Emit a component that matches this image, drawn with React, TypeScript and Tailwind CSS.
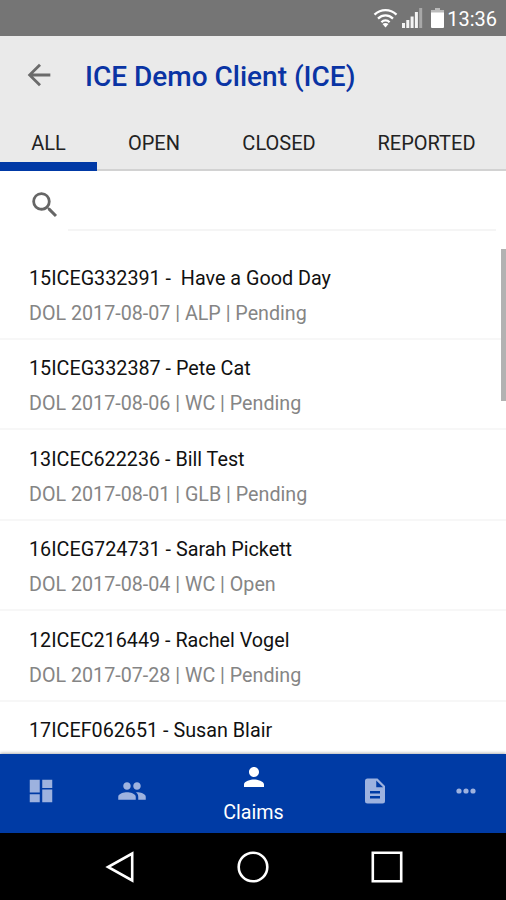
const claims = [
  { id: "15ICEG332391", name: "\u00a0Have a Good Day", details: "DOL 2017-08-07 | ALP | Pending" },
  { id: "15ICEG332387", name: "Pete Cat", details: "DOL 2017-08-06 | WC | Pending" },
  { id: "13ICEC622236", name: "Bill Test", details: "DOL 2017-08-01 | GLB | Pending" },
  { id: "16ICEG724731", name: "Sarah Pickett", details: "DOL 2017-08-04 | WC | Open" },
  { id: "12ICEC216449", name: "Rachel Vogel", details: "DOL 2017-07-28 | WC | Pending" },
  { id: "17ICEF062651", name: "Susan Blair" },
];

const StatusBar = () => (
  <div className="flex h-9 shrink-0 items-center justify-end bg-[#757575] pr-[9px] text-white">
    <svg className="mr-1" width="25" height="20" viewBox="0 0 25 20" fill="none" stroke="#fff" strokeWidth="2.3">
      <path d="M1.5 6.6C8 .6 17 .6 23.5 6.6" />
      <path d="M5 10.6c4.5-4.2 10.5-4.2 15 0" />
      <path d="M8.4 14.2c2.4-2.4 5.8-2.4 8.2 0" />
      <path d="M12.5 19.5l-3-3.4c1.7-1.5 4.3-1.5 6 0z" fill="#fff" stroke="none" />
    </svg>
    <svg className="mr-2" width="21" height="20" viewBox="0 0 21 20" fill="#f4f4f4">
      <path d="M0 15h3v5H0zM4.3 12h3v8h-3zM8.6 8.5h3V20h-3zM12.9 4h3v16h-3z" />
      <path d="M17.2 0h3v20h-3z" opacity=".4" />
    </svg>
    <svg className="mr-[3px]" width="13" height="20" viewBox="0 0 13 20" fill="#fff">
      <path d="M4 0h5v2h4v3H0V2h4z" opacity=".5" />
      <path d="M0 4.5h13V19a1 1 0 0 1-1 1H1a1 1 0 0 1-1-1z" />
    </svg>
    <span className="pt-[2px] text-[20px] leading-5">13:36</span>
  </div>
);

const Header = () => (
  <header className="h-[135px] shrink-0 border-b-2 border-[#d2d2d2] bg-[#eaeaea]">
    <div className="flex h-[78px] items-center pl-[22px]">
      <svg width="34" height="34" viewBox="0 0 24 24" fill="#6b6b6b">
        <path d="M20 11H7.83l5.59-5.59L12 4l-8 8 8 8 1.41-1.41L7.83 13H20v-2z" />
      </svg>
      <h1 className="pl-[29px] pt-[4px] text-[28px] font-medium leading-8 text-[#0a34a4]">
        ICE Demo Client (ICE)
      </h1>
    </div>
    <nav className="flex h-[57px] text-[20px] leading-[58px] text-[#222]">
      <span className="w-[97px] border-b-[9px] border-[#0039a6] text-center">ALL</span>
      <span className="w-[114px] text-center">OPEN</span>
      <span className="w-[136px] text-center">CLOSED</span>
      <span className="w-[159px] text-center">REPORTED</span>
    </nav>
  </header>
);

const Search = () => (
  <div className="flex h-[78px] shrink-0 pl-[28px] pr-[10px] pt-[17px]">
    <svg width="34" height="34" viewBox="0 0 24 24" fill="#666">
      <path d="M15.5 14h-.79l-.28-.27A6.471 6.471 0 0 0 16 9.5 6.5 6.5 0 1 0 9.5 16c1.61 0 3.09-.59 4.23-1.57l.27.28v.79l5 4.99L20.49 19l-4.99-5zm-6 0C7.01 14 5 11.99 5 9.5S7.01 5 9.5 5 14 7.01 14 9.5 11.99 14 9.5 14z" />
    </svg>
    <div className="ml-[6px] h-[43px] flex-1 border-b-2 border-[#f5f5f5]" />
  </div>
);

const TabBar = () => (
  <nav className="relative flex h-[79px] shrink-0 bg-[#003ba5] pl-[26px] text-[#9db2df] shadow-[0_-1px_3px_rgba(0,0,0,0.3)]">
    <svg className="mt-[22px]" width="30" height="30" viewBox="0 0 24 24" fill="currentColor">
      <path d="M3 13.2h8V3H3v10.2zM3 21h8v-6.5H3V21zm10 0h8V10.8h-8V21zm0-18v6.5h8V3h-8z" />
    </svg>
    <svg className="ml-[61px] mt-[22px]" width="30" height="30" viewBox="0 0 24 24" fill="currentColor">
      <path d="M16 11c1.66 0 2.99-1.34 2.99-3S17.66 5 16 5s-3 1.34-3 3 1.34 3 3 3zm-8 0c1.66 0 2.99-1.34 2.99-3S9.66 5 8 5 5 6.34 5 8s1.34 3 3 3zm0 2c-2.33 0-7 1.17-7 3.5V19h14v-2.5c0-2.33-4.67-3.5-7-3.5zm8 0c-.29 0-.62.02-.97.05 1.16.84 1.97 1.97 1.97 3.45V19h6v-2.5c0-2.33-4.67-3.5-7-3.5z" />
    </svg>
    <div className="ml-[75px] flex w-[63px] flex-col items-center pt-[8px] text-white">
      <svg width="30" height="30" viewBox="0 0 24 24" fill="currentColor">
        <path d="M12 12c2.21 0 4-1.79 4-4s-1.79-4-4-4-4 1.79-4 4 1.79 4 4 4zm0 2c-2.67 0-8 1.34-8 4v2h16v-2c0-2.66-5.33-4-8-4z" />
      </svg>
      <span className="mt-[9px] text-[19.7px] leading-6">Claims</span>
    </div>
    <svg className="ml-[75px] mt-[22px]" width="30" height="30" viewBox="0 0 24 24" fill="currentColor">
      <path d="M14 2H6a2 2 0 0 0-2 2v16a2 2 0 0 0 2 2h12a2 2 0 0 0 2-2V8l-6-6zm2 16H8v-2h8v2zm0-4H8v-2h8v2zm-3-5V3.5L18.5 9H13z" />
    </svg>
    <svg className="ml-[61px] mt-[22px]" width="30" height="30" viewBox="0 0 30 30" fill="currentColor">
      <circle cx="8" cy="15" r="2.6" />
      <circle cx="15" cy="15" r="2.6" />
      <circle cx="22" cy="15" r="2.6" />
    </svg>
  </nav>
);

const SystemNav = () => (
  <div className="flex h-[67px] shrink-0 items-center justify-between bg-black px-[102px]">
    <svg width="34" height="34" viewBox="0 0 34 34" fill="none" stroke="#fff" strokeWidth="2.6">
      <path d="M30.2 3.5v27L6 17z" />
    </svg>
    <svg width="34" height="34" viewBox="0 0 34 34" fill="none" stroke="#fff" strokeWidth="2.6">
      <circle cx="17" cy="17" r="14.3" />
    </svg>
    <svg width="34" height="34" viewBox="0 0 34 34" fill="none" stroke="#fff" strokeWidth="2.6">
      <path d="M2.8 2.8h28.4v28.4H2.8z" />
    </svg>
  </div>
);

const App = () => {
  return (
    <div className="flex h-[900px] w-[506px] flex-col overflow-hidden bg-white font-['Roboto',sans-serif]">
      <StatusBar />
      <Header />
      <main className="relative flex min-h-0 flex-1 flex-col overflow-hidden">
        <Search />
        <ul>
          {claims.map((claim) => (
            <li key={claim.id} className="h-[90.5px] border-b-2 border-[#f7f7f7] pl-[29px] pt-[11.5px]">
              <p className="text-[19.75px] leading-[35px] text-[#111]">
                {claim.id} - {claim.name}
              </p>
              {claim.details && (
                <p className="text-[19.72px] leading-[35px] text-[#858585]">{claim.details}</p>
              )}
            </li>
          ))}
        </ul>
        {/* scroll thumb */}
        <div className="absolute right-0 top-[78px] h-[152px] w-[5px] bg-[#b2b2b2]" />
      </main>
      <TabBar />
      <SystemNav />
    </div>
  );
};

export default App;
